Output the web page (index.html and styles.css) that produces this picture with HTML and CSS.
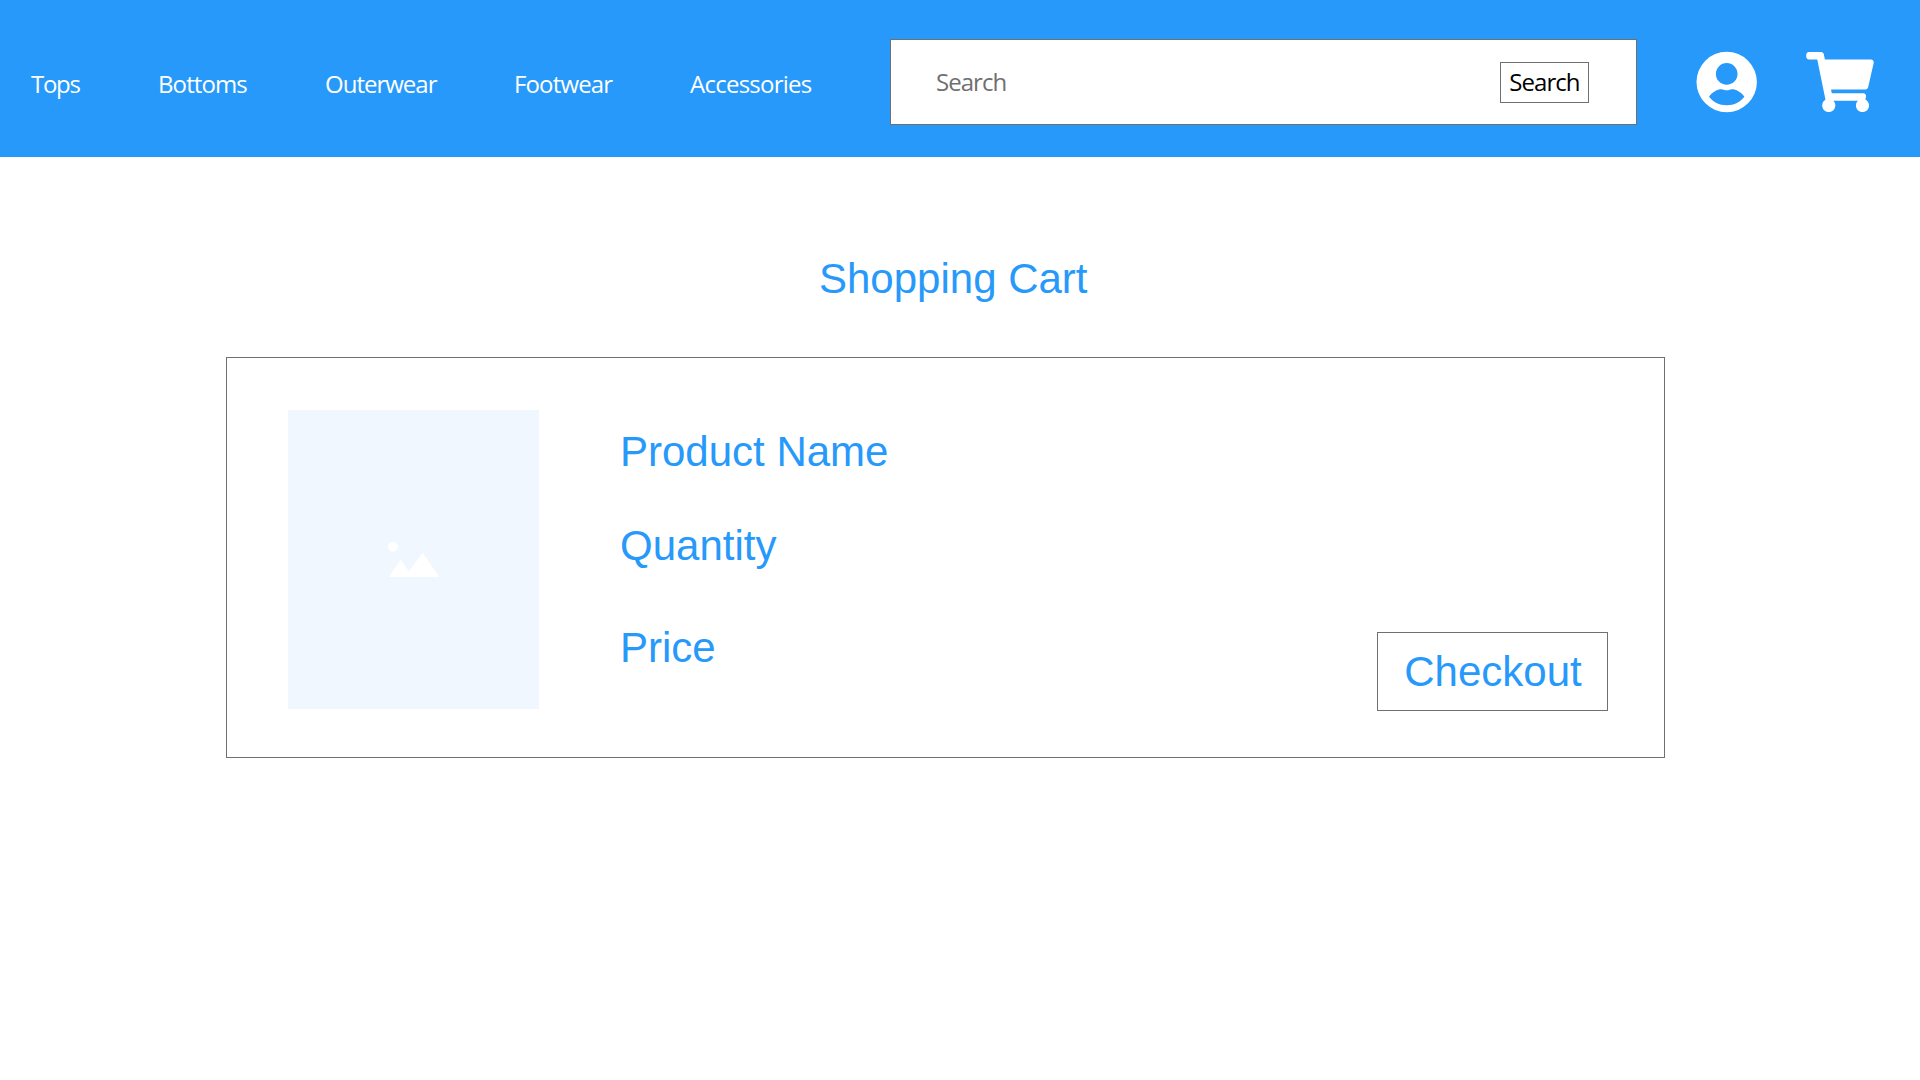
FILE: index.html
```html
<!DOCTYPE html>
<html lang="en">
<head>
<meta charset="utf-8">
<title>Shopping Cart</title>
<link rel="stylesheet" href="styles.css">
</head>
<body>
<header class="header">
  <nav class="nav">
    <a class="nav-link tops">Tops</a>
    <a class="nav-link bottoms">Bottoms</a>
    <a class="nav-link outerwear">Outerwear</a>
    <a class="nav-link footwear">Footwear</a>
    <a class="nav-link accessories">Accessories</a>
  </nav>
  <div class="search">
    <span class="search-hint">Search</span>
    <button class="search-button">Search</button>
  </div>
  <svg class="account-icon" viewBox="0 0 62 62">
    <path fill="#fff" fill-rule="evenodd" d="M30.700 .8a30.200 30.200 0 1 0 0 60.400a30.200 30.200 0 0 0 0-60.400zM30.700 12.100a10.800 10.800 0 1 1 0 21.600a10.800 10.800 0 0 1 0-21.600zM13 45.700C16.300 40.800 21.700 38.200 25.200 38.200C27.700 38.200 28.200 39.300 30.700 39.300C33.200 39.300 33.700 38.200 36.200 38.200C39.700 38.200 45.100 40.800 48.400 45.700C44.500 50.800 38.200 54.200 30.700 54.200C23.200 54.200 16.900 50.800 13 45.700z"/>
  </svg>
  <svg class="cart-icon" viewBox="0 0 576 512">
    <path fill="#fff" d="M528.12 301.319l47.273-208C578.806 78.301 567.391 64 551.99 64H159.208l-9.166-44.810C147.758 8.021 137.930 0 126.529 0H24C10.745 0 0 10.745 0 24v16c0 13.255 10.745 24 24 24h69.883l70.248 343.435C147.325 417.100 136 435.222 136 456c0 30.928 25.072 56 56 56s56-25.072 56-56c0-15.674-6.447-29.835-16.824-40h209.647C430.447 426.165 424 440.326 424 456c0 30.928 25.072 56 56 56s56-25.072 56-56c0-22.172-12.888-41.332-31.579-50.405l5.517-24.276c3.413-15.018-8.002-29.319-23.403-29.319H218.117l-6.545-32h293.145c11.206 0 20.920-7.754 23.403-18.681z"/>
  </svg>
</header>
<main class="main">
  <h1 class="title">Shopping Cart</h1>
  <section class="card">
    <div class="thumb">
      <svg class="thumb-icon" viewBox="0 0 52 37">
        <g fill="#fff"><circle cx="5" cy="5.700" r="5"/><path d="M.8 36L12.700 18.500L21 30.500L34.500 11.500L51.300 36z"/></g>
      </svg>
    </div>
    <div class="details">
      <p class="detail name">Product Name</p>
      <p class="detail quantity">Quantity</p>
      <p class="detail price">Price</p>
    </div>
    <button class="checkout">Checkout</button>
  </section>
</main>
</body>
</html>
```
FILE: styles.css
```css
* {
  box-sizing: border-box;
}

body {
  margin: 0;
  background: #fff;
  font-family: "Liberation Sans", Arial, sans-serif;
}

.header {
  display: flex;
  align-items: flex-start;
  height: 157px;
  background: #2699fb;
  font: 24px/32px "Segoe UI", "Open Sans", sans-serif;
}

.nav {
  display: flex;
  width: 890px;
  padding: 68px 0 0 31px;
  color: #fff;
}

.nav-link {
  flex: none;
  white-space: nowrap;
}

.tops { width: 127px; letter-spacing: -1.3px; }
.bottoms { width: 167px; letter-spacing: -0.9px; }
.outerwear { width: 189px; letter-spacing: -1px; }
.footwear { width: 176px; letter-spacing: -0.85px; }
.accessories { letter-spacing: -0.75px; }

.search {
  display: flex;
  align-items: flex-start;
  justify-content: space-between;
  width: 747px;
  height: 86px;
  margin-top: 39px;
  padding: 22px 47px 0 45px;
  background: #fff;
  border: 1px solid #707070;
  letter-spacing: -0.95px;
}

.search-hint {
  padding-top: 4px;
  color: #707070;
}

.search-button {
  width: 89px;
  height: 41px;
  padding: 0 0 1px;
  background: #fff;
  border: 1px solid #707070;
  color: #000;
  font: inherit;
  letter-spacing: inherit;
}

.account-icon {
  width: 62px;
  height: 62px;
  margin: 51px 0 0 59px;
}

.cart-icon {
  width: 68px;
  height: 60px;
  margin: 52px 0 0 48px;
}

.title {
  margin: 98px 0 0 819px;
  color: #2699fb;
  font-size: 42px;
  font-weight: 400;
  line-height: 48px;
}

.card {
  display: flex;
  align-items: flex-start;
  width: 1439px;
  height: 401px;
  margin: 54px 0 0 226px;
  padding: 52px 56px 0 61px;
  border: 1px solid #707070;
}

.thumb {
  display: flex;
  align-items: center;
  justify-content: center;
  width: 251px;
  height: 299px;
  background: #f0f7ff;
}

.thumb-icon {
  width: 52px;
  height: 37px;
}

.details {
  flex: 1;
  padding: 18px 0 0 81px;
}

.detail {
  margin: 0;
  color: #2699fb;
  font-size: 42px;
  line-height: 48px;
}

.quantity { margin-top: 46px; }
.price { margin-top: 54px; }

.checkout {
  width: 231px;
  height: 79px;
  margin-top: 222px;
  padding: 0 0 0 1px;
  background: #fff;
  border: 1px solid #707070;
  color: #2699fb;
  font: 42px/48px "Liberation Sans", Arial, sans-serif;
}
```
